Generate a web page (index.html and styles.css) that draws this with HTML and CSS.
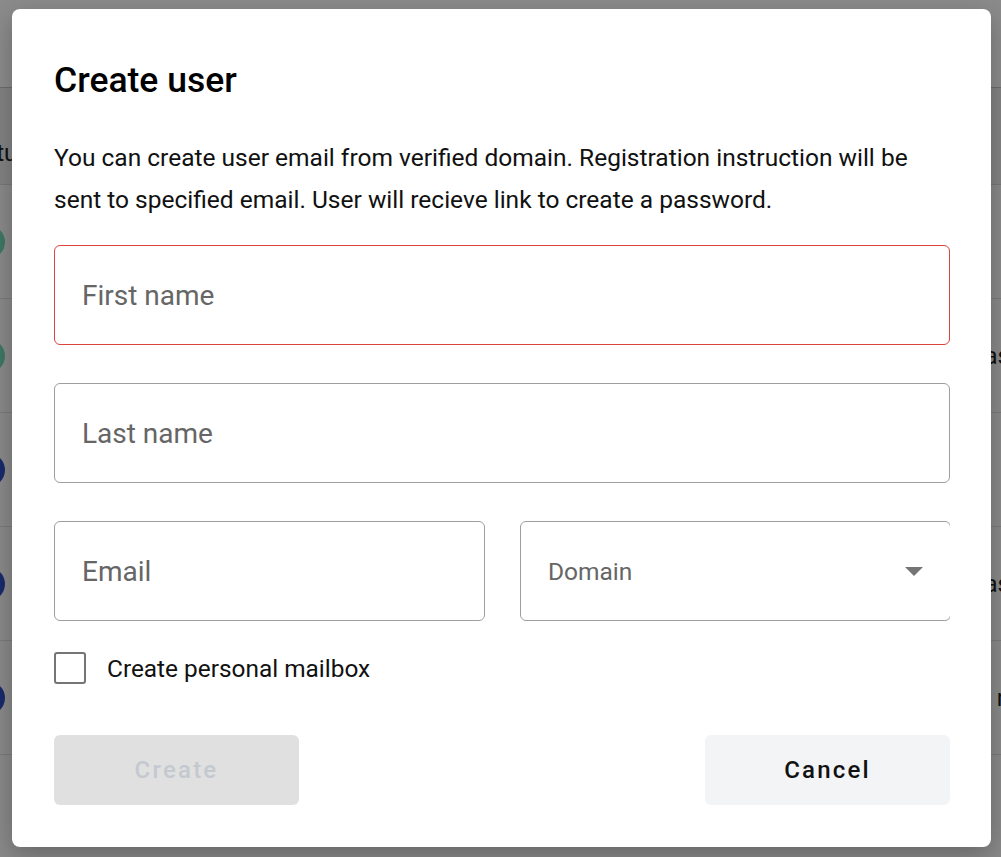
FILE: index.html
```html
<!DOCTYPE html>
<html>
<head>
<meta charset="utf-8">
<link rel="stylesheet" href="styles.css">
</head>
<body>
<div class="page">
  <div class="topbar"></div>
  <div class="thead"><span class="th-text">Status</span></div>
  <div class="row"><span class="avatar green"></span><span class="cell-r"></span></div>
  <div class="row"><span class="avatar green"></span><span class="cell-r">as</span></div>
  <div class="row"><span class="avatar blue"></span><span class="cell-r"></span></div>
  <div class="row"><span class="avatar blue"></span><span class="cell-r">as</span></div>
  <div class="row"><span class="avatar blue"></span><span class="cell-r">n</span></div>
</div>
<div class="overlay"></div>
<div class="dialog">
  <h1 class="title">Create user</h1>
  <p class="desc">You can create user email from verified domain. Registration instruction will be sent to specified email. User will recieve link to create a password.</p>
  <div class="field error"><span class="ph">First name</span></div>
  <div class="field"><span class="ph">Last name</span></div>
  <div class="pair">
    <div class="field half"><span class="ph">Email</span></div>
    <div class="select-clip">
      <div class="select"><span class="ph small">Domain</span><span class="arrow"></span></div>
    </div>
  </div>
  <label class="check"><span class="box"></span><span class="check-label">Create personal mailbox</span></label>
  <div class="actions">
    <button class="btn disabled">Create</button>
    <button class="btn cancel">Cancel</button>
  </div>
</div>
</body>
</html>
```
FILE: styles.css
```css
html, body {
  margin: 0;
  padding: 0;
  width: 1001px;
  height: 857px;
  overflow: hidden;
  font-family: Roboto, "Liberation Sans", sans-serif;
}
body {
  background: #8c8c8c;
  position: relative;
}
.page {
  display: flex;
  flex-direction: column;
}
.topbar {
  height: 88px;
  background: #8e8e8e;
  border-bottom: 1px solid #6f6f6f;
  box-sizing: border-box;
}
.thead {
  height: 97px;
  background: #858585;
  border-bottom: 1px solid #7a7a7a;
  box-sizing: border-box;
  display: flex;
  align-items: flex-end;
  padding-bottom: 16px;
}
.th-text {
  font-size: 24px;
  line-height: 30px;
  color: #111;
  margin-left: -39px;
}
.row {
  height: 114px;
  border-bottom: 1px solid #7c7c7c;
  box-sizing: border-box;
  display: flex;
  align-items: center;
  justify-content: space-between;
}
.avatar {
  width: 34px;
  height: 34px;
  border-radius: 50%;
  margin-left: -29px;
}
.avatar.green { background: #3f7a64; }
.avatar.blue { background: #1a2a6e; }
.cell-r {
  font-size: 24px;
  color: #111;
  margin-right: -9px;
  width: 40px;
  text-align: right;
}
.overlay {
  position: absolute;
  inset: 0;
  background: rgba(0,0,0,0.02);
}
.dialog {
  position: absolute;
  left: 12px;
  top: 9px;
  width: 979px;
  height: 838px;
  box-sizing: border-box;
  background: #fff;
  border-radius: 8px;
  padding: 0 41px 0 42px;
  box-shadow: 0 8px 24px rgba(0,0,0,0.25);
}
.title {
  margin: 0;
  padding-top: 49px;
  font-size: 35.5px;
  line-height: 44px;
  font-weight: 500;
  color: #000;
}
.desc {
  margin: 35px 0 0;
  font-size: 24.5px;
  line-height: 42px;
  color: #111;
  width: 880px;
}
.field {
  margin-top: 24px;
  height: 100px;
  box-sizing: border-box;
  border: 1px solid #9e9e9e;
  border-radius: 6px;
  display: flex;
  align-items: center;
  padding-left: 27px;
}
.field + .field { margin-top: 38px; }
.field.error { border-color: #d9443d; }
.ph {
  font-size: 28px;
  color: #666;
}
.ph.small { font-size: 24.5px; }
.pair {
  display: flex;
  gap: 35px;
  margin-top: 38px;
}
.pair .field { margin-top: 0; }
.field.half { width: 431px; }
.select-clip {
  flex: 1;
  overflow: hidden;
}
.select {
  width: calc(100% + 1px);
  height: 100px;
  box-sizing: border-box;
  border: 1px solid #9e9e9e;
  border-radius: 6px;
  display: flex;
  align-items: center;
  justify-content: space-between;
  padding-left: 27px;
  padding-right: 27px;
}
.arrow {
  width: 0;
  height: 0;
  border-left: 9px solid transparent;
  border-right: 9px solid transparent;
  border-top: 9px solid #757575;
}
.check {
  display: flex;
  align-items: center;
  margin-top: 31px;
  gap: 21px;
}
.box {
  width: 32px;
  height: 32px;
  box-sizing: border-box;
  border: 2px solid #757575;
  border-radius: 3px;
}
.check-label {
  font-size: 24.4px;
  color: #111;
}
.actions {
  display: flex;
  justify-content: space-between;
  margin-top: 51px;
}
.btn {
  width: 245px;
  height: 70px;
  border: none;
  border-radius: 6px;
  font-family: Roboto, "Liberation Sans", sans-serif;
  font-size: 24px;
  font-weight: 500;
  letter-spacing: 2.2px;
}
.btn.disabled {
  background: #e0e0e0;
  color: #c4c9d0;
}
.btn.cancel {
  background: #f3f4f6;
  color: #111;
}
```
